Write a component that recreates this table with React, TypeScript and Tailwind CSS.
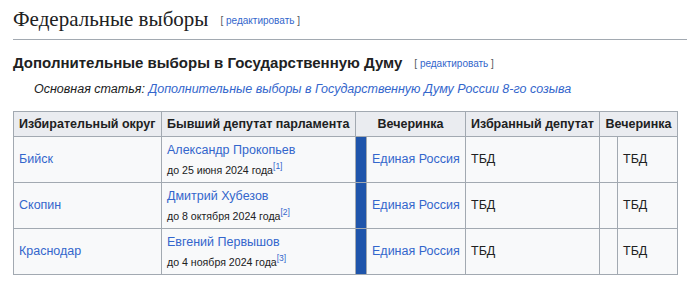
import React from 'react'

const rows = [
  { district: 'Бийск', name: 'Александр Прокопьев', until: 'до 25 июня 2024 года', ref: '[1]' },
  { district: 'Скопин', name: 'Дмитрий Хубезов', until: 'до 8 октября 2024 года', ref: '[2]' },
  { district: 'Краснодар', name: 'Евгений Первышов', until: 'до 4 ноября 2024 года', ref: '[3]' },
]

function Edit() {
  return (
    <span className="ml-3 text-[10px] font-normal text-[#54595d] font-[family-name:'Liberation_Sans',Arial,sans-serif] align-middle">
      [ <span className="text-[#3366cc]">редактировать</span> ]
    </span>
  )
}

export default function App() {
  return (
    <div className="w-[700px] h-[295px] bg-white px-[13px] pt-[4px] text-[#202122] font-[family-name:'Liberation_Sans',Arial,sans-serif] overflow-hidden">
      {/* заголовок раздела */}
      <h2 className="text-[21px] leading-[30px] font-[family-name:'Liberation_Serif',Georgia,serif] border-b border-[#a2a9b1] pb-[3px]">
        Федеральные выборы
        <Edit />
      </h2>

      <h3 className="mt-[12px] text-[15px] leading-[22px] font-bold">
        Дополнительные выборы в Государственную Думу
        <Edit />
      </h3>

      <div className="mt-[3px] pl-[21px] text-[12.5px] leading-[22px] italic">
        Основная статья: <span className="text-[#3366cc]">Дополнительные выборы в Государственную Думу России 8-го созыва</span>
      </div>

      <table className="mt-[11px] table-fixed border-collapse border border-[#a2a9b1] bg-[#f8f9fa] text-[12.5px] w-[664px]">
        <colgroup>
          <col className="w-[148px]" />
          <col className="w-[194px]" />
          <col className="w-[11px]" />
          <col className="w-[99px]" />
          <col className="w-[134px]" />
          <col className="w-[18px]" />
          <col className="w-[60px]" />
        </colgroup>
        <thead>
          <tr className="h-[25px] bg-[#eaecf0] font-bold">
            <th className="border border-[#a2a9b1] px-[5px] text-left whitespace-nowrap">Избирательный округ</th>
            <th className="border border-[#a2a9b1] px-[5px] text-left whitespace-nowrap">Бывший депутат парламента</th>
            <th colSpan={2} className="border border-[#a2a9b1] px-[5px] text-center">Вечеринка</th>
            <th className="border border-[#a2a9b1] px-[5px] text-left whitespace-nowrap">Избранный депутат</th>
            <th colSpan={2} className="border border-[#a2a9b1] px-[4px] text-center">Вечеринка</th>
          </tr>
        </thead>
        <tbody>
          {rows.map((r) => (
            <tr key={r.district} className="h-[46px]">
              <td className="border border-[#a2a9b1] px-[5px] text-[#3366cc]">{r.district}</td>
              <td className="border border-[#a2a9b1] px-[5px] leading-[20px]">
                <div className="text-[#3366cc]">{r.name}</div>
                <div className="text-[10.6px] whitespace-nowrap">
                  {r.until}
                  <sup className="text-[8.5px] text-[#3366cc]">{r.ref}</sup>
                </div>
              </td>
              <td className="border border-[#a2a9b1] bg-[#1f55ab]"></td>
              <td className="border border-[#a2a9b1] px-[5px] text-[#3366cc] whitespace-nowrap">Единая Россия</td>
              <td className="border border-[#a2a9b1] px-[5px]">ТБД</td>
              <td className="border border-[#a2a9b1]"></td>
              <td className="border border-[#a2a9b1] px-[5px]">ТБД</td>
            </tr>
          ))}
        </tbody>
      </table>
    </div>
  )
}
